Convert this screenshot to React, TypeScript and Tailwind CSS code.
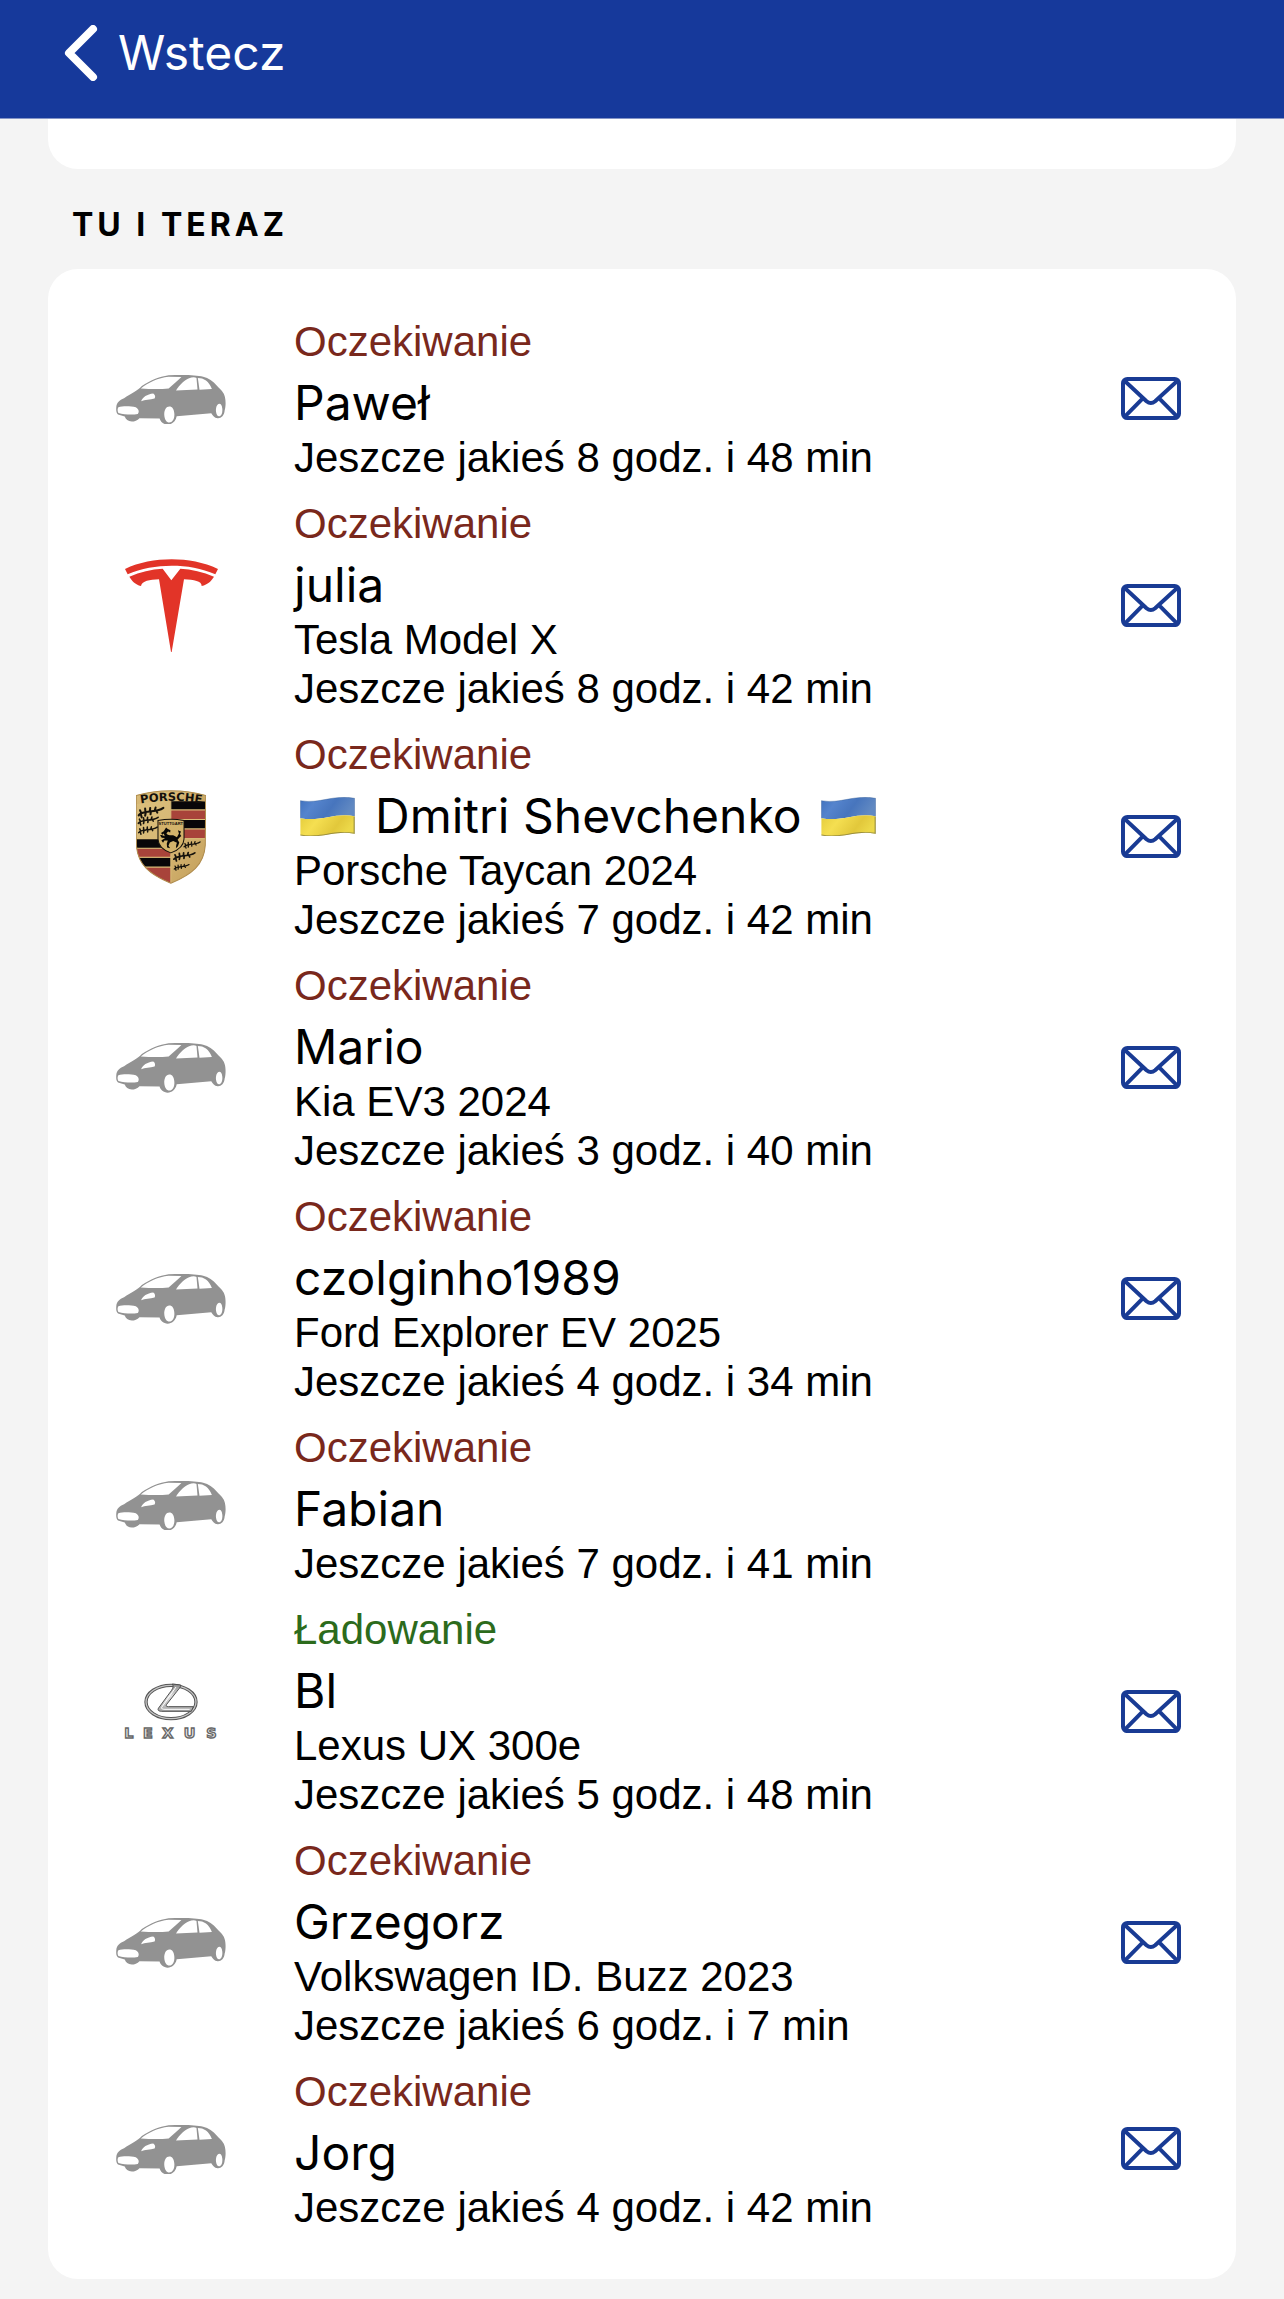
import React from "react";

type Brand = "car" | "tesla" | "porsche" | "lexus";

interface Visit {
  charging?: boolean;
  name: string;
  flags?: boolean;
  vehicle?: string;
  remaining: string;
  brand: Brand;
  contact: boolean;
}

const visits: Visit[] = [
  { name: "Paweł", remaining: "Jeszcze jakieś 8 godz. i 48 min", brand: "car", contact: true },
  { name: "julia", vehicle: "Tesla Model X", remaining: "Jeszcze jakieś 8 godz. i 42 min", brand: "tesla", contact: true },
  { name: "Dmitri Shevchenko", flags: true, vehicle: "Porsche Taycan 2024", remaining: "Jeszcze jakieś 7 godz. i 42 min", brand: "porsche", contact: true },
  { name: "Mario", vehicle: "Kia EV3 2024", remaining: "Jeszcze jakieś 3 godz. i 40 min", brand: "car", contact: true },
  { name: "czolginho1989", vehicle: "Ford Explorer EV 2025", remaining: "Jeszcze jakieś 4 godz. i 34 min", brand: "car", contact: true },
  { name: "Fabian", remaining: "Jeszcze jakieś 7 godz. i 41 min", brand: "car", contact: false },
  { name: "Bl", vehicle: "Lexus UX 300e", charging: true, remaining: "Jeszcze jakieś 5 godz. i 48 min", brand: "lexus", contact: true },
  { name: "Grzegorz", vehicle: "Volkswagen ID. Buzz 2023", remaining: "Jeszcze jakieś 6 godz. i 7 min", brand: "car", contact: true },
  { name: "Jorg", remaining: "Jeszcze jakieś 4 godz. i 42 min", brand: "car", contact: true },
];

function CarIcon() {
  return (
    <svg viewBox="48 74 328 152" className="w-[110px]" aria-hidden="true">
      <path
        fill="#929292"
        fillRule="evenodd"
        d="M49 171C50 160 58 151 72 146C92 134 115 121 125 110C150 94 176 82 205 78C240 76 285 76 308 82C324 86 337 95 349 109C360 121 370 128 373 143C376 157 375 174 372 183C371 198 361 207 351 206C341 205 337 198 332 191L229 200C226 216 214 225 202 225C190 225 180 216 178 207L118 206C112 213 103 216 95 216C84 216 77 209 74 201L54 195C48 190 48 181 49 171ZM122 117C144 99 174 85 205 82L243 83C233 93 216 107 205 117C180 120 149 119 122 117ZM227 123C238 107 253 91 266 87C274 83 284 83 288 86L291 120ZM292 86C310 86 325 95 334 119L297 121ZM123 155C127 143 141 134 159 132C165 136 166 142 163 147C150 150 134 151 123 155ZM55 173C67 169 91 169 107 173C116 178 118 187 113 193C94 197 72 194 55 190C52 185 52 178 55 173ZM207 171C197 171 191 183 192 197C193 210 199 219 207 219C216 219 223 208 222 193C221 179 216 171 207 171ZM356 163C349 164 346 173 346 184C347 195 352 202 357 200C363 198 366 189 365 178C364 168 361 163 356 163Z"
      />
    </svg>
  );
}

function TeslaLogo() {
  return (
    <svg viewBox="44 56 279 280" className="w-[93px]" role="img" aria-label="Tesla">
      <g fill="#e23428">
        <path d="M44 86C86 66 135 57 184 57C232 57 280 66 323 86L315 102C274 83 229 76 184 76C139 76 92 84 52 102Z" />
        <path d="M57 109C90 94 123 87 157 85L183 120L210 85C244 87 278 94 311 109C303 122 293 132 274 137C274 122 251 119 221 117L184 335H182L146 117C117 119 96 121 92 137C74 132 65 122 57 109Z" />
      </g>
    </svg>
  );
}

function Antler({ x, y, s = 1 }: { x: number; y: number; s?: number }) {
  return (
    <path
      transform={`translate(${x} ${y}) scale(${s})`}
      fill="none"
      stroke="#15120c"
      strokeWidth="6"
      strokeLinecap="round"
      d="M0 23C6 14 17 15 28 12C41 11 61 10 73 1M8 17L4 8M20 13L19 3M33 12L34 1M47 10L50 0M6 19L9 29M21 14L19 24M36 12L35 20M52 9L55 15"
    />
  );
}

function PorscheLogo() {
  return (
    <svg viewBox="50 32 207 278" className="w-[70px]" role="img" aria-label="Porsche">
      <defs>
        <linearGradient id="crest-gold" x1="0" y1="0" x2="1" y2="1">
          <stop offset="0" stopColor="#dcc07c" />
          <stop offset="0.5" stopColor="#d6b775" />
          <stop offset="1" stopColor="#c29d58" />
        </linearGradient>
        <clipPath id="crest-shape">
          <path d="M51 48C89 37 121 34 153 34C185 34 219 37 256 48L255 195C251 254 215 282 153 308C91 282 55 254 51 195Z" />
        </clipPath>
        <path id="crest-arc" d="M53 74Q153 54 256 74" />
      </defs>
      <g clipPath="url(#crest-shape)">
        <path fill="url(#crest-gold)" d="M49 30H259V310H49Z" />
        <path fill="#080608" d="M153 65H256V90H153ZM153 120H256V146H153ZM50 177H153V204H50ZM50 232H153V260H50Z" />
        <path fill="#a8433a" d="M153 91H256V118H153ZM153 147H256V174H153ZM50 205H153V231H50ZM50 261H153V310H50Z" />
        <path fill="none" stroke="#d9bc78" strokeWidth="3" d="M153 65V308M51 176H254M51 204H153M51 231H153M51 260H153M153 91H254M153 119H254M153 147H254" />
        <path fill="url(#crest-gold)" d="M50 30H259V66Q153 54 50 74Z" />
      </g>
      <path fill="none" stroke="#b08c4d" strokeWidth="3" d="M51 48C89 37 121 34 153 34C185 34 219 37 256 48L255 195C251 254 215 282 153 308C91 282 55 254 51 195Z" />
      <text fill="#14100b" fontFamily="DejaVu Sans" fontWeight="700" fontSize="34">
        <textPath href="#crest-arc" startOffset="50%" textAnchor="middle">PORSCHE</textPath>
      </text>
      <Antler x={58} y={84} />
      <Antler x={57} y={112} s={0.8} />
      <Antler x={58} y={141} s={0.75} />
      <Antler x={192} y={185} s={0.65} />
      <Antler x={162} y={217} s={0.85} />
      <Antler x={163} y={252} s={0.6} />
      <path fill="#d3b36b" stroke="#14100b" strokeWidth="3" d="M115 122Q153 115 192 122V177C191 197 176 210 153 218C130 210 116 197 115 177Z" />
      <text x="153" y="136" textAnchor="middle" fill="#14100b" fontFamily="Liberation Sans" fontWeight="700" fontSize="12">STUTTGART</text>
      <path fill="#080706" d="M139 143L144 147L152 151L151 158L145 155L140 160C145 169 154 164 163 167L171 172L177 161L174 151L183 155L180 162L184 168L178 173L173 179L178 187L174 198L168 204L169 195L171 188L160 183L150 187L146 197L151 204L142 202L141 190L144 181L134 181L130 188L125 181L136 174L126 173L121 166L126 165L135 169L132 161L128 164L124 159L132 154Z" />
    </svg>
  );
}

function LexusLogo() {
  return (
    <svg viewBox="43 40 282 170" className="w-[94px]" role="img" aria-label="Lexus">
      <defs>
        <linearGradient id="chrome" x1="0" y1="0" x2="0" y2="1">
          <stop offset="0" stopColor="#8a8a8a" />
          <stop offset="0.45" stopColor="#dddddd" />
          <stop offset="1" stopColor="#a5a5a5" />
        </linearGradient>
      </defs>
      <ellipse cx="184" cy="97" rx="75" ry="50" fill="none" stroke="#555555" strokeWidth="10" />
      <ellipse cx="184" cy="97" rx="75" ry="50" fill="none" stroke="#c4c4c4" strokeWidth="4" />
      <path fill="url(#chrome)" stroke="#505050" strokeWidth="3" strokeLinejoin="round" d="M188 43L213 46C213 54 207 58 201 66L171 104C168 109 170 111 176 111H251L245 125H156C145 125 142 120 149 112L185 63C191 54 192 50 188 43Z" />
      <path fill="none" stroke="#ffffff" strokeWidth="3" d="M199 52L156 113C154 117 158 119 166 119H240" />
      <text x="44 100 158 222 290" y="204" fill="#e8e8e8" stroke="#666666" strokeWidth="4" fontFamily="DejaVu Sans" fontWeight="700" fontSize="43">LEXUS</text>
    </svg>
  );
}

function BrandMark({ brand }: { brand: Brand }) {
  if (brand === "tesla") return <TeslaLogo />;
  if (brand === "porsche") return <PorscheLogo />;
  if (brand === "lexus") return <LexusLogo />;
  return <CarIcon />;
}

function MailIcon() {
  return (
    <svg viewBox="63 53 181 130" className="w-[60px]" fill="none" stroke="#193b94" strokeWidth="12" aria-hidden="true">
      <rect x="69" y="59" width="169" height="118" rx="13" />
      <path strokeLinejoin="round" d="M72 63L140 126Q153 137 166 126L235 63M73 174L128 118M234 174L179 118" />
    </svg>
  );
}

function UkraineFlag() {
  return (
    <svg viewBox="0 0 138 118" preserveAspectRatio="none" className="h-[39px] w-[55px] shrink-0" role="img" aria-label="Flaga Ukrainy">
      <defs>
        <linearGradient id="flag-blue" x1="0" y1="0" x2="1" y2="0.3">
          <stop offset="0" stopColor="#3e70bd" />
          <stop offset="0.3" stopColor="#5584cd" />
          <stop offset="0.65" stopColor="#4775bd" />
          <stop offset="1" stopColor="#6189c2" />
        </linearGradient>
        <linearGradient id="flag-yellow" x1="0" y1="0" x2="1" y2="0.3">
          <stop offset="0" stopColor="#e4cc3c" />
          <stop offset="0.35" stopColor="#f5df51" />
          <stop offset="0.75" stopColor="#e2c83b" />
          <stop offset="1" stopColor="#ecd849" />
        </linearGradient>
      </defs>
      <path fill="url(#flag-blue)" d="M1 11C48 22 86-9 137 4V58C89 46 52 76 1 64Z" />
      <path fill="url(#flag-yellow)" d="M1 64C52 76 89 46 137 58V111C87 99 51 128 1 116Z" />
      <path fill="none" stroke="#716b37" strokeOpacity="0.65" strokeWidth="3" d="M1 115C51 127 87 98 136 110V59" />
      <path fill="none" stroke="#315b91" strokeOpacity="0.5" strokeWidth="2" d="M1 64V11C48 22 86-9 137 4V58" />
    </svg>
  );
}

function VisitRow({ visit }: { visit: Visit }) {
  return (
    <li className="flex items-center py-2">
      <div className="flex w-[246px] shrink-0 justify-center">
        <BrandMark brand={visit.brand} />
      </div>
      <div className="min-w-0 flex-1 text-[42px] leading-[49px]">
        <p className={visit.charging ? "leading-[51px] text-[#2c6b1c]" : "leading-[51px] text-[#79281c]"}>
          {visit.charging ? "Ładowanie" : "Oczekiwanie"}
        </p>
        <h2 className="mt-1.5 flex items-center font-[Inter,sans-serif] text-[48px] leading-[60px]">
          {visit.flags ? (
            <span className="flex items-center gap-5 pl-1.5">
              <UkraineFlag />
              {visit.name}
              <UkraineFlag />
            </span>
          ) : (
            visit.name
          )}
        </h2>
        {visit.vehicle && <p>{visit.vehicle}</p>}
        <p>{visit.remaining}</p>
      </div>
      <div className="flex w-[170px] shrink-0 justify-center">
        {visit.contact && (
          <button type="button" aria-label={`Wyślij wiadomość: ${visit.name}`}>
            <MailIcon />
          </button>
        )}
      </div>
    </li>
  );
}

export default function App() {
  return (
    <div className="min-h-screen bg-[#f4f4f4] pb-5 font-['Liberation_Sans',Arial,sans-serif] text-black">
      <header className="flex h-[119px] items-start border-b border-[#8494c6] bg-[#16399b] px-16 pt-6 text-white">
        <button type="button" className="flex items-center gap-5 font-[Inter,sans-serif] text-[48px] leading-[58px]">
          <svg viewBox="0 0 34 56" className="w-[34px]" fill="none" stroke="currentColor" strokeWidth="8" strokeLinecap="round" strokeLinejoin="round" aria-hidden="true">
            <path d="M29 4L5 28L29 52" />
          </svg>
          Wstecz
        </button>
      </header>
      <main className="px-12">
        <div className="h-[50px] rounded-b-[30px] bg-white" />
        <h1 className="px-6 pt-9 pb-6 font-[Inter,sans-serif] text-[32px] leading-[40px] font-bold tracking-[4px]">TU I TERAZ</h1>
        <ul className="rounded-[30px] bg-white py-[39px]">
          {visits.map((visit) => (
            <VisitRow key={visit.name} visit={visit} />
          ))}
        </ul>
      </main>
    </div>
  );
}
